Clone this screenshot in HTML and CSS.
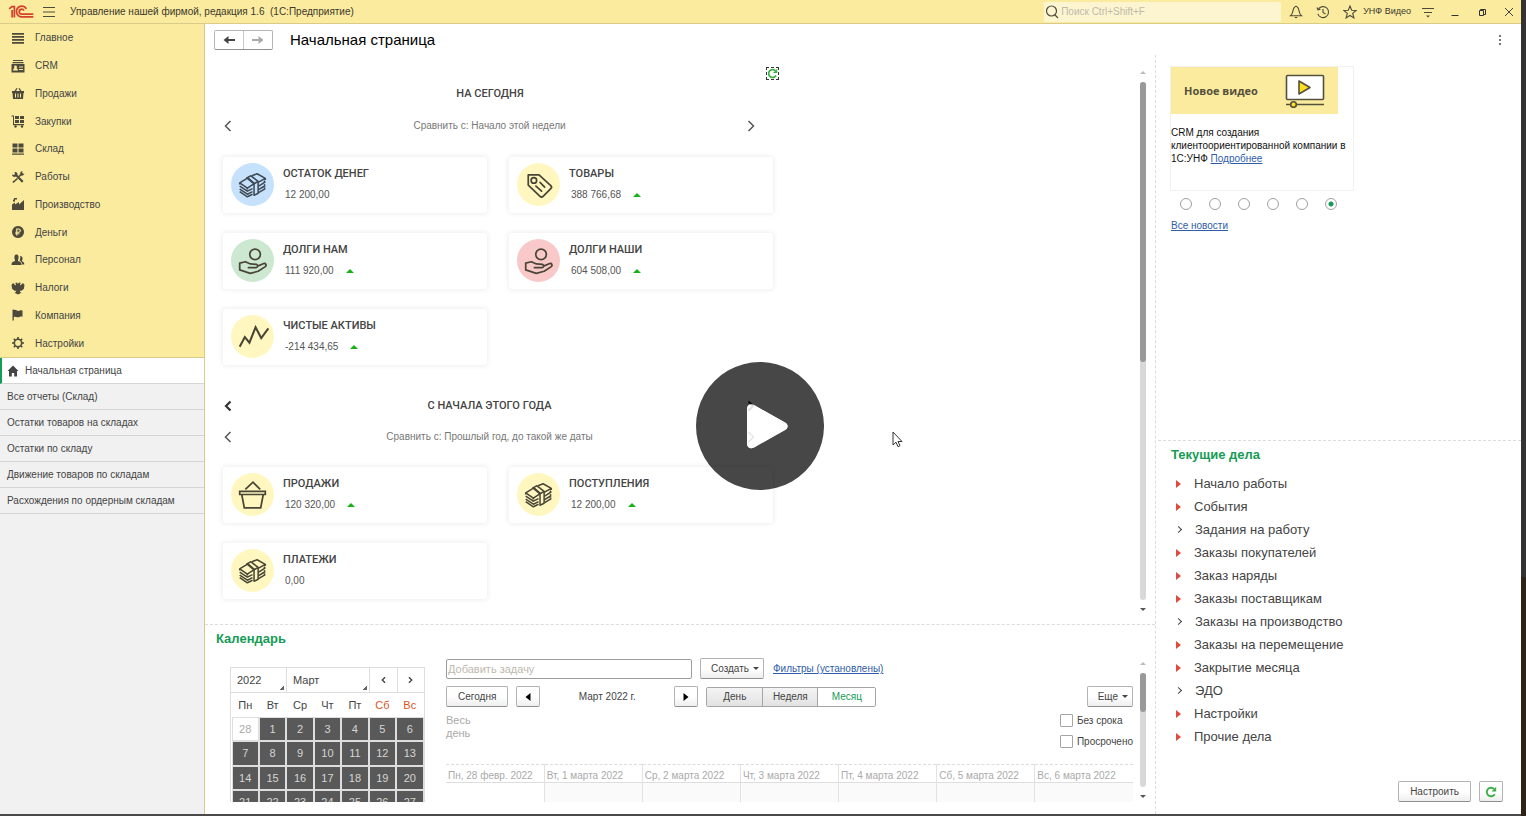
FILE: index.html
```html
<!DOCTYPE html>
<html lang="ru">
<head>
<meta charset="utf-8">
<title>Управление нашей фирмой</title>
<link rel="stylesheet" href="styles.css">
</head>
<body>
<svg class="sprite" aria-hidden="true">
  <symbol id="money" viewBox="0 0 42 42">
    <g fill="none" stroke="currentColor" stroke-width="1.5" stroke-linejoin="round">
      <path d="M8.500 19.500l8-5 6.500 5.500-7 4.500z"/>
      <path d="M8.500 22.500l7.500 5 5-2.500M8.500 25.500l7.500 5 5-2.500M8.500 28l7.500 5 5-2.500M8.500 19.500v1.500M16 24.500v1.500"/>
      <path d="M15.500 14.500l4-2 7 5.500v11.500l-4 2V20.500zM26.500 18l-3.500 2"/>
      <path d="M20.500 12.500l5-2 8 4.500-7 4M33.500 15v1.500M27 22.500l6.500-4M27 26l6.500-4M27 29l6.500-4M33.500 18.500l-1.500-1M33.500 22l-1.500-1M33.500 25l-1.500-1"/>
    </g>
  </symbol>
  <symbol id="hand" viewBox="0 0 42 42">
    <g fill="none" stroke="currentColor" stroke-width="1.7" stroke-linejoin="round" stroke-linecap="round">
      <circle cx="23.500" cy="15" r="5.200"/>
      <path d="M17 28h7.500c1.800 0 2-2.500.3-3.200l-5.800-.4-5-2.200-5.500 1.300v6.700l10.300 3.300 7.700-2 7-4.500c1.500-1.500.5-3.500-1.500-3l-6 2.500"/>
    </g>
  </symbol>
  <symbol id="tag" viewBox="0 0 42 42">
    <g fill="none" stroke="currentColor" stroke-width="1.7" stroke-linejoin="round" stroke-linecap="round">
      <path d="M11 11.500h10.500L33 22c1 1 1 2 0 3l-7.500 7.500c-1 1-2 1-3 0L11 21.500z"/>
      <circle cx="16.500" cy="17" r="2.700"/>
      <path d="M22.500 19l4.500 4.500M18.500 22.500l5.500 5"/>
    </g>
  </symbol>
  <symbol id="chart" viewBox="0 0 42 42">
    <path d="M8.500 31l5-9.500 4.500 5.500L24 12l5.500 10.500L36.500 13" fill="none" stroke="currentColor" stroke-width="2"/>
  </symbol>
  <symbol id="basket" viewBox="0 0 42 42">
    <path d="M8.500 18h25v3h-25zM10.500 21l2.500 13h16l2.500-13M14 16l7.500-7 7 7" fill="none" stroke="currentColor" stroke-width="1.700"/>
  </symbol>
  <symbol id="prev" viewBox="0 0 8 12"><path d="M6.500 1L1.500 6l5 5" fill="none" stroke="currentColor" stroke-width="1.500"/></symbol>
  <symbol id="next" viewBox="0 0 8 12"><path d="M1.500 1l5 5-5 5" fill="none" stroke="currentColor" stroke-width="1.500"/></symbol>
  <symbol id="prev-bold" viewBox="0 0 8 12"><path d="M6.500 1.500L2 6l4.500 4.500" fill="none" stroke="currentColor" stroke-width="2.200"/></symbol>
  <symbol id="next-bold" viewBox="0 0 8 12"><path d="M1.500 1.500L6 6l-4.500 4.500" fill="none" stroke="currentColor" stroke-width="2.200"/></symbol>
  <symbol id="reload" viewBox="0 0 12 12"><path d="M9.800 8.200a4.300 4.300 0 1 1-.6-5.200" fill="none" stroke="#3db04a" stroke-width="1.900"/><path d="M11.200.8v4.700H6.500z" fill="#3db04a"/></symbol>
</svg>

<div class="screen">
  <header class="topbar">
    <svg class="logo" viewBox="0 0 24 14" fill="none" stroke="#d6402c" stroke-width="1.600">
      <path d="M1 4.500L3.500 2.500H5.800V12.500M3.700 12.500V5.500" />
      <path d="M17 4.500A5 5 0 1 0 12.500 12H23.500"/>
      <path d="M14.700 6.200a2.300 2.300 0 1 0-2 3.300H23.500"/>
    </svg>
    <button class="icon-btn" aria-label="Меню"><svg viewBox="0 0 14 14" stroke="#4d4a3c"><path d="M1 2.500h12M1 7h12M1 11.500h12"/></svg></button>
    <h1 class="app-title">Управление нашей фирмой, редакция 1.6&nbsp; (1С:Предприятие)</h1>
    <label class="search">
      <svg viewBox="0 0 14 14" fill="none" stroke="#4d4a3c" stroke-width="1.200"><circle cx="6.500" cy="6" r="5"/><path d="M10 10l3 3"/></svg>
      <input type="text" placeholder="Поиск Ctrl+Shift+F" aria-label="Поиск">
    </label>
    <nav class="tools">
      <button class="icon-btn" aria-label="Уведомления"><svg viewBox="0 0 14 14" fill="none" stroke="#4d4a3c" stroke-width="1.100"><path d="M7 1.200C4.500 2 4.200 4 3.800 6.500 3.500 8.500 2.800 9.500 1.500 10.700h11C11.200 9.500 10.500 8.500 10.200 6.500 9.800 4 9.500 2 7 1.200z"/><path d="M5.800 12.500h2.400"/></svg></button>
      <button class="icon-btn" aria-label="История"><svg viewBox="0 0 14 14" fill="none" stroke="#4d4a3c" stroke-width="1.100"><path d="M2.300 4.300a5.500 5.500 0 1 1-.5 4.500M1 2.500l1 2.300 2.500-.5M7 4v3.500l2.500 1.500"/></svg></button>
      <button class="icon-btn" aria-label="Избранное"><svg viewBox="0 0 14 14" fill="none" stroke="#4d4a3c" stroke-width="1.100"><path d="M7 1l1.700 4.200 4.500.3-3.500 2.900 1.200 4.500L7 10.500l-3.900 2.400 1.200-4.500L.8 5.500l4.500-.3z"/></svg></button>
      <span class="user">УНФ Видео</span>
      <button class="icon-btn" aria-label="Настройка панели"><svg viewBox="0 0 14 14" stroke="#4d4a3c"><path d="M1 3.500h12M3 7.500h8"/><path d="M5 10.500h4l-2 2z" fill="#4d4a3c" stroke="none"/></svg></button>
      <button class="icon-btn win" aria-label="Свернуть"><svg viewBox="0 0 14 14" stroke="#333"><path d="M3.500 10.500h7"/></svg></button>
      <button class="icon-btn win" aria-label="Развернуть"><svg viewBox="0 0 14 14" fill="none" stroke="#333"><path d="M4.500 5.500h4v5h-4zM5.500 5V4.500h5v5h-1.500"/></svg></button>
      <button class="icon-btn win" aria-label="Закрыть"><svg viewBox="0 0 14 14" stroke="#444"><path d="M3 3l8 8M11 3l-8 8"/></svg></button>
    </nav>
  </header>

  <aside class="sidebar">
    <nav class="sections">
      <a href="#"><svg viewBox="0 0 14 14"><path d="M1 2h12v1.700H1zM1 5h12v1.700H1zM1 8h12v1.700H1zM1 11h12v1.700H1z"/></svg>Главное</a>
      <a href="#"><svg viewBox="0 0 14 14"><path fill-rule="evenodd" d="M2 1h10v1H2zM1.500 3h11v1.200h-11zM.5 5h13v8.500H.5zM2 11.500h5c0-1.500-1-2-1.500-2.200C6.500 8 6 6.500 4.500 6.500S2.500 8 3.500 9.300C3 9.500 2 10 2 11.500zM8 7.500h4v1H8zM8 10h4v1H8z"/></svg>CRM</a>
      <a href="#"><svg viewBox="0 0 14 14"><path fill-rule="evenodd" d="M1 5h2.500l2-3 1 .5L5 5h4L7.500 2.500l1-.5 2 3H13v2h-.5L12 13H2L1.500 7H1zM4 7.500v4h1v-4zM6.500 7.500v4h1v-4zM9 7.500v4h1v-4z"/></svg>Продажи</a>
      <a href="#"><svg viewBox="0 0 14 14"><path d="M.5 1.500H3V10h10v1.200H2V2.500H.5zM4 2h4v3H4zM9 2h4v3H9zM4 6h4v3H4zM9 6h4v3H9z"/><circle cx="4.500" cy="12.500" r="1.200"/><circle cx="11" cy="12.500" r="1.200"/></svg>Закупки</a>
      <a href="#"><svg viewBox="0 0 14 14"><path d="M1.500 1.500h5v4h-5zM7.500 1.500h5v4h-5zM1.500 6.500h5v4h-5zM7.500 6.500h5v4h-5zM1 11.500h12v1.300H1z"/></svg>Склад</a>
      <a href="#"><svg viewBox="0 0 14 14"><path d="M1 4.500l2 .5 1-1-.5-2C5.500 1.500 7 3 6.500 5l6 6-1.500 1.800L5 6.500C3 7.500 1 6.500 1 4.500zM9 4.500L9.500 2l2-1-.3 2 1 .8 1.300-.3-1.500 2-2 .3-2.500 2-1-1zM6 8l1 1-4.500 4L1.200 12z"/></svg>Работы</a>
      <a href="#"><svg viewBox="0 0 14 14"><path d="M1 13V7.500l3-2v2L8 5v2.500L13 3v10zM2 2.500h2v2H2zM3 1h3v1.500H3z"/></svg>Производство</a>
      <a href="#"><svg viewBox="0 0 14 14"><path fill-rule="evenodd" d="M7 1a6 6 0 1 0 .01 0zM5.200 3.500h2.600c2.800 0 2.800 4.200 0 4.200H6.400v.6h2v1h-2v1.200H5.200V9.300h-.9v-1h.9v-.6h-.9v-1h.9zM6.400 4.600v2.100h1.300c1.300 0 1.300-2.100 0-2.100z"/></svg>Деньги</a>
      <a href="#"><svg viewBox="0 0 14 14"><path d="M5.500 1.500C8 1.500 8 5 7 7v1c2 .7 3.500 1 3.500 3.500V12H.5v-.5C.5 9 2 8.700 4 8V7C3 5 3 1.500 5.500 1.500zM9 3c3 0 3 3 2 4.500v.7c1.500.6 2.300 1 2.300 3.300h-2C11 9 9.500 8.200 8.500 7.500c.8-1.500 1-3 .5-4.500z"/></svg>Персонал</a>
      <a href="#"><svg viewBox="0 0 14 14"><path d="M7 3l1-1.500 2 .5-1 1 .3 1.500L12 2l1.500 2-.7 4-2.800 2-1.200-.5.3 1.500 1.400.8-1.500.7L7 13.500 5 12.500l-1.500-.7 1.400-.8.300-1.500L4 10 1.200 8 .5 4 2 2l2.700 2.500L5 3 4 2l2-.5z"/></svg>Налоги</a>
      <a href="#"><svg viewBox="0 0 14 14"><path d="M1.500 1.500h1V2C5 1 6 3.500 8 2.800c1-.4 2-.8 3.500-.3v6.300C9 8 8.500 9.500 6.500 9.300 5 9 4 8.300 2.800 9v3.500H1.500z"/></svg>Компания</a>
      <a href="#"><svg viewBox="0 0 14 14" class="gear"><circle cx="7" cy="7" r="3.700"/><path d="M7 1v2M7 11v2M1 7h2M11 7h2M2.800 2.800l1.400 1.400M9.800 9.800l1.400 1.400M2.800 11.200l1.400-1.400M9.800 4.200l1.400-1.400"/></svg>Настройки</a>
    </nav>
    <nav class="tabs">
      <a href="#" class="active"><svg viewBox="0 0 12 12"><path d="M6 .5L.5 6H2v5.500h2.800V8h2.400v3.500H10V6h1.500z"/></svg>Начальная страница</a>
      <a href="#">Все отчеты (Склад)</a>
      <a href="#">Остатки товаров на складах</a>
      <a href="#">Остатки по складу</a>
      <a href="#">Движение товаров по складам</a>
      <a href="#">Расхождения по ордерным складам</a>
    </nav>
  </aside>

  <main class="page">
    <div class="page-head">
      <div class="history">
        <button aria-label="Назад"><svg viewBox="0 0 12 10"><path d="M5.500 1v3H12v2H5.500v3L.5 5z" fill="#444"/></svg></button>
        <button aria-label="Вперед"><svg viewBox="0 0 12 10"><path d="M6.500 1v3H0v2h6.500v3l5-4z" fill="#aaa"/></svg></button>
      </div>
      <h2>Начальная страница</h2>
      <button class="more" aria-label="Еще"><svg viewBox="0 0 4 12" fill="#777"><path d="M1 1h2v2H1zM1 5h2v2H1zM1 9h2v2H1z"/></svg></button>
    </div>

    <div class="columns">
      <div class="left">
        <section class="dashboard">
          <div class="widgets">
            <button class="refresh" aria-label="Обновить"><svg viewBox="0 0 12 12"><use href="#reload"/></svg></button>
            <h3 class="period">НА СЕГОДНЯ</h3>
            <div class="compare">
              <button aria-label="Назад"><svg viewBox="0 0 8 12"><use href="#prev"/></svg></button>
              <span>Сравнить с: Начало этой недели</span>
              <button aria-label="Вперед"><svg viewBox="0 0 8 12"><use href="#next"/></svg></button>
            </div>
            <div class="cards">
              <article class="card"><svg class="round blue" viewBox="0 0 42 42"><use href="#money"/></svg><div><h4>ОСТАТОК ДЕНЕГ</h4><p>12 200,00</p></div></article>
              <article class="card"><svg class="round yellow" viewBox="0 0 42 42"><use href="#tag"/></svg><div><h4>ТОВАРЫ</h4><p class="up">388 766,68</p></div></article>
              <article class="card"><svg class="round green" viewBox="0 0 42 42"><use href="#hand"/></svg><div><h4>ДОЛГИ НАМ</h4><p class="up">111 920,00</p></div></article>
              <article class="card"><svg class="round red" viewBox="0 0 42 42"><use href="#hand"/></svg><div><h4>ДОЛГИ НАШИ</h4><p class="up">604 508,00</p></div></article>
              <article class="card"><svg class="round yellow" viewBox="0 0 42 42"><use href="#chart"/></svg><div><h4>ЧИСТЫЕ АКТИВЫ</h4><p class="up">-214 434,65</p></div></article>
            </div>
            <div class="compare year">
              <button class="dark" aria-label="Назад"><svg viewBox="0 0 8 12"><use href="#prev-bold"/></svg></button>
              <h3>С НАЧАЛА ЭТОГО ГОДА</h3>
              <button class="dark" aria-label="Вперед"><svg viewBox="0 0 8 12"><use href="#next-bold"/></svg></button>
            </div>
            <div class="compare">
              <button aria-label="Назад"><svg viewBox="0 0 8 12"><use href="#prev"/></svg></button>
              <span>Сравнить с: Прошлый год, до такой же даты</span>
              <button aria-label="Вперед"><svg viewBox="0 0 8 12"><use href="#next"/></svg></button>
            </div>
            <div class="cards">
              <article class="card"><svg class="round yellow" viewBox="0 0 42 42"><use href="#basket"/></svg><div><h4>ПРОДАЖИ</h4><p class="up">120 320,00</p></div></article>
              <article class="card"><svg class="round yellow" viewBox="0 0 42 42"><use href="#money"/></svg><div><h4>ПОСТУПЛЕНИЯ</h4><p class="up">12 200,00</p></div></article>
              <article class="card"><svg class="round yellow" viewBox="0 0 42 42"><use href="#money"/></svg><div><h4>ПЛАТЕЖИ</h4><p>0,00</p></div></article>
            </div>
          </div>
          <div class="scroll"><i class="tri up-faint"></i><div class="track"><div class="thumb long"></div></div><i class="tri down"></i></div>
        </section>

        <section class="calendar">
          <h3 class="green-title">Календарь</h3>
          <div class="cal-body">
            <div class="mini">
              <div class="mini-head">
                <button class="pick">2022</button>
                <button class="pick">Март</button>
                <button aria-label="Предыдущий месяц"><svg viewBox="0 0 8 12"><use href="#prev-bold"/></svg></button>
                <button aria-label="Следующий месяц"><svg viewBox="0 0 8 12"><use href="#next-bold"/></svg></button>
              </div>
              <table class="days">
                <thead><tr><th>Пн</th><th>Вт</th><th>Ср</th><th>Чт</th><th>Пт</th><th class="off">Сб</th><th class="off">Вс</th></tr></thead>
                <tbody>
                  <tr><td class="other">28</td><td>1</td><td>2</td><td>3</td><td>4</td><td>5</td><td>6</td></tr>
                  <tr><td>7</td><td>8</td><td>9</td><td>10</td><td>11</td><td>12</td><td>13</td></tr>
                  <tr><td>14</td><td>15</td><td>16</td><td>17</td><td>18</td><td>19</td><td>20</td></tr>
                  <tr><td>21</td><td>22</td><td>23</td><td>24</td><td>25</td><td>26</td><td>27</td></tr>
                </tbody>
              </table>
            </div>
            <div class="planner">
              <div class="row">
                <input class="task" type="text" placeholder="Добавить задачу" aria-label="Добавить задачу">
                <button class="btn drop">Создать<i class="caret"></i></button>
                <a class="link" href="#">Фильтры (установлены)</a>
              </div>
              <div class="row">
                <button class="btn">Сегодня</button>
                <button class="btn square" aria-label="Назад"><svg viewBox="0 0 6 8"><path d="M5.500 0v8L.5 4z"/></svg></button>
                <span class="month">Март 2022 г.</span>
                <button class="btn square" aria-label="Вперед"><svg viewBox="0 0 6 8"><path d="M.5 0v8l5-4z"/></svg></button>
                <div class="segments"><button>День</button><button>Неделя</button><button class="on">Месяц</button></div>
                <button class="btn drop extra">Еще<i class="caret"></i></button>
              </div>
              <div class="allday">
                <span>Весь<br>день</span>
                <div class="checks">
                  <label><input type="checkbox">Без срока</label>
                  <label><input type="checkbox">Просрочено</label>
                </div>
              </div>
              <table class="week">
                <thead><tr><th>Пн, 28 февр. 2022</th><th>Вт, 1 марта 2022</th><th>Ср, 2 марта 2022</th><th>Чт, 3 марта 2022</th><th>Пт, 4 марта 2022</th><th>Сб, 5 марта 2022</th><th>Вс, 6 марта 2022</th></tr></thead>
                <tbody><tr><td class="blank"></td><td></td><td></td><td></td><td></td><td></td><td></td></tr></tbody>
              </table>
            </div>
            <div class="scroll small"><i class="tri up-faint"></i><div class="track"><div class="thumb short"></div></div><i class="tri down"></i></div>
          </div>
        </section>
      </div>

      <div class="right">
        <section class="news">
          <article class="news-card">
            <div class="banner">
              <strong>Новое видео</strong>
              <svg viewBox="0 0 40 34" stroke="#55503c" stroke-width="1.600" stroke-linejoin="round">
                <rect x="1.500" y="1.500" width="37" height="24" rx="1" fill="#fff"/>
                <path d="M14 7v13l11-6.500z" fill="#ffdf1e"/>
                <path d="M1 30.500h38"/><circle cx="8.500" cy="30.500" r="2.800" fill="#ffdf1e"/>
              </svg>
            </div>
            <p>CRM для создания клиентоориентированной компании в 1С:УНФ <a class="link" href="#">Подробнее</a></p>
          </article>
          <div class="dots">
            <input type="radio" name="news" aria-label="Новость 1">
            <input type="radio" name="news" aria-label="Новость 2">
            <input type="radio" name="news" aria-label="Новость 3">
            <input type="radio" name="news" aria-label="Новость 4">
            <input type="radio" name="news" aria-label="Новость 5">
            <input type="radio" name="news" aria-label="Новость 6" checked>
          </div>
          <a class="link" href="#">Все новости</a>
        </section>
        <section class="todo">
          <h3 class="green-title">Текущие дела</h3>
          <ul>
            <li class="hot">Начало работы</li>
            <li class="hot">События</li>
            <li>Задания на работу</li>
            <li class="hot">Заказы покупателей</li>
            <li class="hot">Заказ наряды</li>
            <li class="hot">Заказы поставщикам</li>
            <li>Заказы на производство</li>
            <li class="hot">Заказы на перемещение</li>
            <li class="hot">Закрытие месяца</li>
            <li>ЭДО</li>
            <li class="hot">Настройки</li>
            <li class="hot">Прочие дела</li>
          </ul>
          <div class="todo-foot">
            <button class="btn">Настроить</button>
            <button class="btn square" aria-label="Обновить"><svg class="sync" viewBox="0 0 12 12"><use href="#reload"/></svg></button>
          </div>
        </section>
      </div>
    </div>
  </main>

  <button class="play" aria-label="Воспроизвести">
    <svg viewBox="0 0 128 128">
      <path fill="#000" fill-opacity=".72" fill-rule="evenodd" d="M64 0a64 64 0 1 0 .01 0zM51 47c0-4 3.500-6 7-4l31 17.500c3.500 2 3.500 5.500 0 7.500l-31 17.500c-3.500 2-7 0-7-4z"/>
      <path fill="#fff" fill-opacity=".85" d="M51 47c0-4 3.500-6 7-4l31 17.500c3.500 2 3.500 5.500 0 7.500l-31 17.500c-3.500 2-7 0-7-4z"/>
    </svg>
  </button>
  <svg class="pointer" viewBox="0 0 12 18"><path d="M1 1v13l3-2.800 2 4.500 2-1-2-4.200h4z" fill="#fff" stroke="#333"/></svg>
</div>
</body>
</html>
```

FILE: styles.css
```css
* { box-sizing: border-box; }
body {
  margin: 0;
  font: 10px/13px "Liberation Sans", Arial, sans-serif;
  color: #444;
  background: linear-gradient(#333 577px, #2e2318 577px);
}
h1, h2, h3, h4, p, ul { margin: 0; padding: 0; font: inherit; }
button { margin: 0; padding: 0; border: 0; background: none; font: inherit; color: inherit; }
input { font: inherit; margin: 0; }
a { color: inherit; text-decoration: none; }
.sprite { display: none; }

.screen {
  position: relative;
  height: 100vh;
  margin-right: 5px;
  display: grid;
  grid-template: 24px minmax(0, 1fr) / 205px minmax(0, 1fr);
  background: #fff;
  border-bottom: 2px solid #4a4a4a;
}

.topbar {
  grid-column: 1 / -1;
  display: flex;
  align-items: center;
  padding: 0 5px 0 8px;
  background: #faeb9e;
  border-bottom: 1px solid #d9cb88;
}
.logo { width: 26px; height: 15px; margin-right: 8px; }
.icon-btn { display: flex; }
.icon-btn svg { width: 14px; height: 14px; }
.app-title { margin-left: 14px; color: #3b382c; }
.search {
  display: flex;
  align-items: center;
  width: 237px;
  height: 20px;
  margin-left: auto;
  padding-left: 1px;
  background: #fdf5cf;
  border-radius: 2px;
}
.search svg { width: 14px; height: 14px; }
.search input { flex: 1; min-width: 0; border: 0; padding: 0 2px; background: none; }
::placeholder { color: #bdb9ad; opacity: 1; }
.tools { display: flex; align-items: center; gap: 13px; margin-left: 8px; }
.user { font-size: 9px; margin: 0 -3px 0 -7px; color: #3b382c; }

.sidebar { background: #f1f1f1; border-right: 1px solid #d9cb88; }
.sections {
  display: grid;
  grid-auto-rows: 1fr;
  height: 334px;
  background: #faeb9e;
  border-bottom: 1px solid #d9cb88;
}
.sections a { display: flex; align-items: center; gap: 10px; padding-left: 11px; }
.sections svg { width: 14px; height: 14px; fill: #4d4a3c; }
.sections .gear { fill: none; stroke: #4d4a3c; stroke-width: 1.6; }
.tabs a {
  display: flex;
  align-items: center;
  height: 26px;
  padding-left: 7px;
  border-bottom: 1px solid #d5d5d5;
}
.tabs .active { background: #fff; border-left: 2px solid #0f9d58; padding-left: 5px; gap: 6px; }
.tabs svg { width: 12px; height: 12px; fill: #444; }

.page { display: flex; flex-direction: column; min-width: 0; min-height: 0; }
.page-head { display: flex; align-items: center; height: 31px; padding: 0 17px 0 9px; }
.history {
  display: flex;
  height: 20px;
  border: 1px solid #b5b5b5;
  border-bottom-color: #8f8f8f;
  border-radius: 2px;
}
.history button { width: 28px; display: grid; place-items: center; }
.history button + button { width: 29px; border-left: 1px solid #c8c8c8; }
.history svg { width: 12px; height: 10px; }
.page-head h2 { margin-left: 17px; font-size: 15px; line-height: 18px; color: #000; }
.more { margin-left: auto; width: 8px; display: grid; place-items: center; }
.more svg { width: 4px; height: 12px; }

.columns { flex: 1; min-height: 0; display: grid; grid-template: minmax(0, 1fr) / minmax(0, 1fr) 366px; }
.left { display: grid; grid-template: minmax(0, 3fr) minmax(0, 1fr) / minmax(0, 1fr); }
.right {
  display: grid;
  grid-template: minmax(0, 385fr) minmax(0, 374fr) / minmax(0, 1fr);
  border-left: 1px dashed #dcdcdc;
}

.dashboard { display: flex; justify-content: space-between; padding: 12px 9px 9px 17px; overflow: hidden; }
.widgets { width: 551px; flex: none; padding-left: 1px; }
.refresh { display: flex; width: 13px; height: 13px; margin-left: auto; margin-right: -6px; border: 1px dashed #333; }
.refresh svg { width: 11px; height: 11px; }
.period, .compare h3 { font: 500 11px/18px Roboto, sans-serif; text-align: center; color: #444; }
.period { padding: 5px 16px 0 0; }
.compare { display: flex; justify-content: space-between; align-items: center; height: 31px; padding: 0 18px 0 1px; color: #777; }
.period + .compare { height: 45px; }
.compare button { display: flex; color: #555; }
.compare svg { width: 8px; height: 12px; }
.compare .dark { color: #333; }
.year { margin-top: 25px; }
.cards { display: grid; grid-template-columns: repeat(2, 264px); gap: 20px 22px; margin-top: 9px; }
.period ~ .year ~ .cards { margin-top: 15px; }
.card {
  display: flex;
  gap: 9px;
  height: 56px;
  padding: 6px 8px;
  border-radius: 3px;
  box-shadow: 0 0 5px 1px #eee;
}
.round { width: 43px; height: 43px; border-radius: 50%; color: #4a4637; flex: none; }
.blue { background: #c5e1fb; color: #3d4a55; }
.yellow { background: #fff7bf; }
.green { background: #cde8d1; }
.red { background: #f9c9c9; }
.card h4 { font: 500 11px/14px Roboto, sans-serif; margin-top: 4px; color: #444; }
.card p { margin: 7px 0 0 2px; color: #555; }
.up::after {
  content: "";
  display: inline-block;
  margin-left: 12px;
  vertical-align: 1px;
  border: 4px solid transparent;
  border-top: 0;
  border-bottom: 4px solid #16b216;
}

.scroll { display: flex; flex-direction: column; align-items: center; gap: 8px; padding: 4px 0; width: 6px; }
.track { flex: 1; width: 6px; border-radius: 3px; background: #d8d8d8; }
.thumb { border-radius: 3px; background: #999; }
.long { height: 54%; }
.short { height: 34%; }
.tri { border: 3px solid transparent; }
.up-faint { border-top: 0; border-bottom-color: #bbb; }
.down { border-bottom: 0; border-top-color: #555; }

.green-title { font-size: 13px; line-height: 15px; font-weight: bold; color: #159c55; }
.calendar { display: flex; flex-direction: column; padding: 6px 9px 12px 11px; border-top: 1px dashed #dcdcdc; min-height: 0; }
.cal-body { flex: 1; min-height: 0; display: flex; margin-top: 12px; overflow: hidden; }
.mini { width: 195px; flex: none; margin: 9px 0 0 14px; border: 1px solid #dedede; border-bottom: 0; font-size: 11px; }
.mini-head { display: grid; grid-template-columns: 55px 83px 1fr 1fr; height: 25px; border-bottom: 1px solid #dedede; }
.mini-head button + button { border-left: 1px solid #dedede; }
.mini-head svg { width: 5px; height: 8px; }
.pick { padding-left: 6px; text-align: left; background: linear-gradient(135deg, transparent 50%, #666 50%) right 2px bottom 2px / 4px 4px no-repeat; }
.days { width: 100%; table-layout: fixed; border-collapse: collapse; text-align: center; }
.days th { height: 24px; padding: 0; font-weight: normal; }
.days .off { color: #d9541e; }
.days td { height: 24px; padding: 0; border: 1px solid #fff; outline: 1px solid #dedede; outline-offset: -1px; background: #595959; color: #d5d5d5; }
.days tr:nth-child(even) td { height: 25px; }
.days .other { background: #fff; color: #aaa; }

.planner { flex: 1; min-width: 0; margin-left: 21px; }
.row { display: flex; align-items: center; gap: 8px; height: 21px; margin-bottom: 7px; }
.task { width: 246px; height: 20px; padding: 0 1px; border: 1px solid #9c9c9c; border-radius: 2px; font-size: 11px; }
.link { color: #2f5da8; text-decoration: underline; }
.row .link { margin-left: 1px; }
.btn {
  display: flex;
  align-items: center;
  justify-content: center;
  height: 21px;
  padding: 0 11px;
  border: 1px solid #b3b3b3;
  border-bottom: 1px solid #8f8f8f;
  border-radius: 2px;
  background: linear-gradient(#fff 50%, #eee);
}
.drop { padding: 0 4px 0 10px; }
.square { width: 24px; padding: 0; }
.square svg { width: 6px; height: 8px; fill: #000; }
.square .sync { width: 12px; height: 12px; }
.caret { margin-left: 4px; border: 3px solid transparent; border-top-color: #444; border-bottom: 0; }
.month { width: 118px; text-align: center; }
.segments { display: flex; height: 20px; border: 1px solid #a5a5a5; border-radius: 2px; overflow: hidden; }
.segments button { width: 55px; background: linear-gradient(#f4f4f4, #e2e2e2); }
.segments button + button { border-left: 1px solid #a5a5a5; }
.segments .on { width: 58px; background: #fff; color: #159c55; }
.extra { margin-left: auto; }
.allday { display: flex; justify-content: space-between; height: 50px; color: #aaa; font-size: 11px; }
.checks { display: grid; align-content: start; gap: 8px; color: #444; font-size: 10px; }
.checks label { display: flex; align-items: center; gap: 4px; }
input[type="checkbox"] { appearance: none; width: 13px; height: 13px; border: 1px solid #a5a5a5; border-radius: 1px; }
.week { width: 100%; table-layout: fixed; border-collapse: collapse; border-top: 1px dashed #dcdcdc; color: #aaa; }
.week th { height: 18px; padding: 4px 0 0 2px; font-weight: normal; text-align: left; white-space: nowrap; border-bottom: 1px solid #dedede; }
.week td { height: 30px; background: #fafafa; }
.week .blank { background: #fff; }
.week th + th, .week td + td { border-left: 1px solid #e2e2e2; }
.small { margin-left: 7px; }

.news { padding: 12px 15px; }
.news-card { width: 182px; min-height: 123px; outline: 1px solid #f1f1f1; }
.banner { display: flex; align-items: center; justify-content: space-between; width: 167px; height: 47px; padding: 0 13px; background: #faeb9e; }
.banner strong { font: bold 11px/14px "Open Sans", sans-serif; color: #55503c; }
.banner svg { width: 40px; height: 34px; }
.news-card p { margin-top: 12px; color: #111; }
.dots { display: flex; gap: 17px; padding: 8px 0 9px 9px; }
input[type="radio"] { appearance: none; width: 12px; height: 12px; border: 1px solid #a0a0a0; border-radius: 50%; }
input[type="radio"]:checked { background: radial-gradient(circle, #0f9d58 2px, transparent 3px); }

.todo { display: flex; flex-direction: column; padding: 6px 18px 12px 13px; margin-left: 2px; border-top: 1px dashed #dcdcdc; }
.todo ul { list-style: none; margin-top: 10px; font-size: 13px; line-height: 23px; }
.todo li { display: flex; align-items: center; padding-left: 5px; }
.todo li::before {
  content: "";
  width: 4px;
  height: 4px;
  margin-right: 14px;
  border: solid #444;
  border-width: 1px 1px 0 0;
  transform: rotate(45deg);
}
.todo .hot::before { width: 0; height: 0; border: 4px solid transparent; border-left: 5px solid #e04a3c; border-right: 0; margin-right: 13px; transform: none; }
.todo-foot { display: flex; justify-content: flex-end; gap: 8px; margin-top: auto; }

.play { position: absolute; left: calc(50% - 65px); top: calc(50% + 19px - 64px); width: 128px; height: 128px; }
.play svg { display: block; width: 128px; height: 128px; }
.pointer { position: absolute; left: 892px; top: 431px; width: 12px; height: 18px; }
```
